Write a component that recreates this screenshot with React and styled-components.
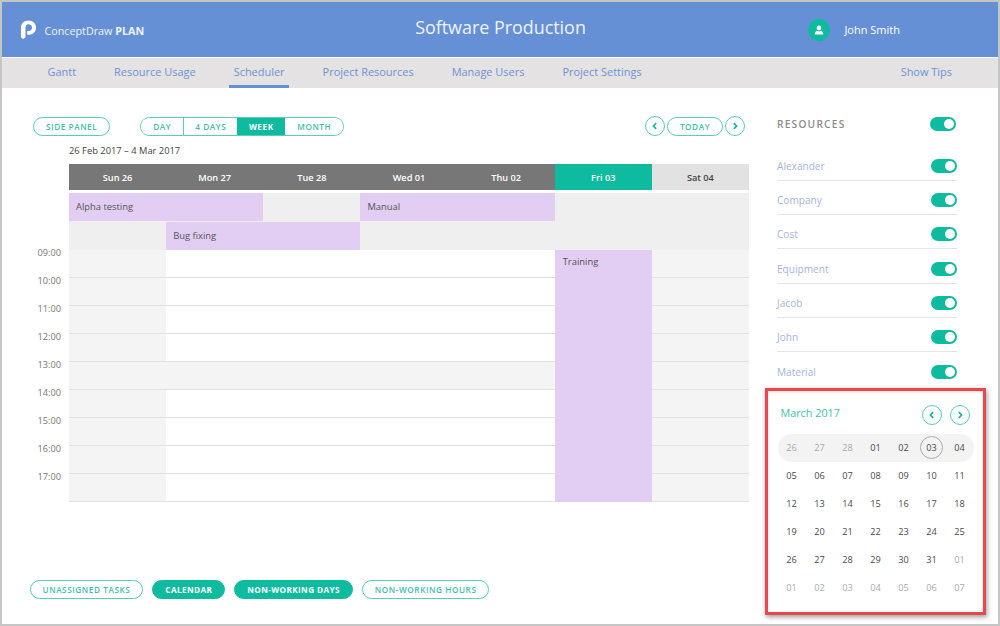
import React from "react";
import styled, { createGlobalStyle } from "styled-components";

const Global = createGlobalStyle`
  html, body { margin: 0; padding: 0; background: #fff; }
  body { font-family: "Open Sans", "Liberation Sans", sans-serif; }
  * { box-sizing: border-box; }
`;

const teal = "#0fbb9f";

const Page = styled.div`
  width: 1000px;
  height: 626px;
  border: 2px solid #c6c6c6;
  display: flex;
  flex-direction: column;
  overflow: hidden;
`;
const Header = styled.header`
  height: 55px;
  background: #6690d6;
  display: grid;
  grid-template-columns: 1fr auto 1fr;
  align-items: center;
  padding: 0 17px 0 18px;
  color: #fff;
`;
const Brand = styled.div`
  display: flex;
  align-items: center;
  gap: 7.5px;
  font-size: 10.75px;
  color: #eef3fb;
  span {
    transform: translateY(1px);
  }
`;
const Title = styled.h1`
  margin: 0;
  font-size: 17.9px;
  font-weight: 400;
  color: #eef3fb;
  transform: translateY(-3.5px);
`;
const User = styled.div`
  justify-self: end;
  margin-right: 81px;
  display: flex;
  align-items: center;
  gap: 14px;
  font-size: 11px;
  font-weight: 500;
`;
const Avatar = styled.span`
  width: 22px;
  height: 22px;
  margin-left: 1px;
  border-radius: 50%;
  background: ${teal};
  display: flex;
  align-items: center;
  justify-content: center;
`;
const Nav = styled.nav`
  height: 30px;
  margin-top: 1px;
  background: #e4e2e2;
  display: flex;
  padding: 0 46px 0 45.5px;
  gap: 38px;
  font-size: 10.96px;
  color: #6f93d4;
`;
const NavItem = styled.a`
  height: 30px;
  display: flex;
  align-items: center;
  padding: 0 4.5px;
  margin: 0 -4.5px;
  border-bottom: 3px solid ${(p) => (p.$active ? "#6690d6" : "transparent")};
  ${(p) => p.$right && "margin-left: auto;"}
`;
const Main = styled.main`
  flex: 1;
  display: flex;
  min-height: 0;
`;
const Left = styled.section`
  width: 775px;
  padding: 28px 0 0 31px;
  display: flex;
  flex-direction: column;
`;
const Toolbar = styled.div`
  display: flex;
  align-items: center;
  height: 20px;
  padding-right: 32px;
`;
const Pill = styled.button`
  height: 19px;
  padding: 0 12px;
  border-radius: 10px;
  border: 1px solid ${(p) => (p.$on ? teal : "#57cdba")};
  background: ${(p) => (p.$on ? teal : "#fff")};
  color: ${(p) => (p.$on ? "#fff" : "#3fbfaa")};
  font: ${(p) => (p.$on ? 700 : 600)} 8.2px "Open Sans", sans-serif;
  letter-spacing: ${(p) => (p.$on ? 0.38 : 0.57)}px;
  white-space: nowrap;
`;
const Segments = styled.div`
  display: flex;
  height: 19px;
  margin-left: 30px;
  border: 1px solid #57cdba;
  border-radius: 10px;
  overflow: hidden;
`;
const Segment = styled.div`
  width: ${(p) => p.$w}px;
  display: flex;
  align-items: center;
  justify-content: center;
  font-size: 8.2px;
  font-weight: ${(p) => (p.$on ? 700 : 600)};
  letter-spacing: 0.55px;
  background: ${(p) => (p.$on ? teal : "#fff")};
  color: ${(p) => (p.$on ? "#fff" : "#3fbfaa")};
  border-left: ${(p) => (p.$sep ? "1px solid #57cdba" : "none")};
`;
const Pager = styled.div`
  margin-left: auto;
  display: flex;
  align-items: center;
  gap: 2px;
`;
const Round = styled.button`
  width: 20px;
  height: 20px;
  padding: 0;
  border-radius: 50%;
  border: 1px solid #57cdba;
  background: #fff;
  display: flex;
  align-items: center;
  justify-content: center;
`;
const TodayPill = styled(Pill)`
  width: 56px;
  padding: 0;
`;
const Range = styled.div`
  margin: 7px 0 0 36px;
  height: 16px;
  font-size: 9.35px;
  line-height: 16px;
  color: #444;
`;
const Board = styled.div`
  margin-top: 5px;
  display: flex;
`;
const Times = styled.div`
  width: 36px;
  padding-top: 86px;
  display: flex;
  flex-direction: column;
  align-items: flex-end;
  padding-right: 8px;
`;
const Time = styled.div`
  height: 28px;
  font-size: 9.2px;
  line-height: 12px;
  color: #777;
  transform: translateY(-3px);
`;
const Calendar = styled.div`
  width: 680px;
  display: flex;
  flex-direction: column;
`;
const Week = styled.div`
  display: grid;
  grid-template-columns: repeat(7, 1fr);
  height: 26px;
`;
const Day = styled.div`
  display: flex;
  align-items: center;
  justify-content: center;
  font-size: 9.2px;
  font-weight: 600;
  background: ${(p) => p.$bg};
  color: ${(p) => p.$fg};
`;
const AllDay = styled.div`
  margin-top: 3px;
  height: 57px;
  background: #efefef;
  display: grid;
  grid-template-columns: repeat(7, 1fr);
  grid-template-rows: 28px 28px;
  row-gap: 1px;
`;
const Event = styled.div`
  grid-column: ${(p) => p.$col} / span ${(p) => p.$span};
  grid-row: ${(p) => p.$row} / span ${(p) => p.$rows || 1};
  background: #e2cdf3;
  color: #555;
  font-size: 9.4px;
  padding: ${(p) => p.$top || 6}px 7px;
  padding-left: ${(p) => p.$left || 7}px;
  line-height: 16px;
  z-index: 1;
`;
const Hours = styled.div`
  display: grid;
  grid-template-columns: repeat(7, 1fr);
  grid-template-rows: repeat(9, 28px);
`;
const Cell = styled.div`
  grid-column: ${(p) => p.$col};
  grid-row: ${(p) => p.$row};
  background: ${(p) => (p.$off ? "#f4f4f4" : "#fff")};
  border-bottom: 1px solid #e2e2e2;
`;
const Toggles = styled.div`
  margin-top: auto;
  margin-bottom: 25px;
  margin-left: -3.5px;
  display: flex;
  gap: 9px;
`;
const Side = styled.aside`
  flex: 1;
  padding: 26px 0 0 0;
  position: relative;
`;
const Resources = styled.div`
  width: 180px;
`;
const ResHead = styled.div`
  height: 20px;
  display: flex;
  align-items: center;
  justify-content: space-between;
  font-size: 10.2px;
  font-weight: 600;
  letter-spacing: 1.2px;
  color: #8e8c8a;
  margin-bottom: 13px;
  padding-right: 1px;
`;
const ResRow = styled.div`
  height: 34.15px;
  padding-top: 5.25px;
  display: flex;
  align-items: center;
  justify-content: space-between;
  font-size: 10.1px;
  color: #a5b5e0;
  border-bottom: ${(p) => (p.$last ? "none" : "1px solid #e4e4e4")};
`;
const Switch = styled.span`
  width: 26px;
  height: 14px;
  background: ${teal};
  border-radius: 7px;
  display: flex;
  align-items: center;
  justify-content: flex-end;
  padding-right: 2px;
  &::after {
    content: "";
    width: 10px;
    height: 10px;
    border-radius: 50%;
    background: #fff;
  }
`;
const DateCard = styled.div`
  position: absolute;
  left: -12px;
  top: 300px;
  width: 220.5px;
  height: 227px;
  border: 3px solid #e9474c;
  box-shadow: 1px 2px 5px rgba(0, 0, 0, 0.4), inset 0 1px 3px rgba(0, 0, 0, 0.15);
  background: #fff;
  padding: 12px 9.5px 0;
`;
const MonthBar = styled.div`
  display: flex;
  align-items: center;
  justify-content: space-between;
  height: 24px;
  padding: 0 3px 0 3px;
  margin-bottom: 6.5px;
`;
const MonthName = styled.div`
  font-size: 10.8px;
  color: #3fbfa8;
  margin-top: -5px;
`;
const MonthNav = styled.div`
  display: flex;
  gap: 8px;
`;
const MonthGrid = styled.div`
  display: grid;
  grid-template-columns: repeat(7, 28px);
  grid-auto-rows: 28px;
`;
const Highlight = styled.div`
  grid-column: 1 / -1;
  display: grid;
  grid-template-columns: repeat(7, 28px);
  background: #f3f3f3;
  border-radius: 14px;
`;
const DateCell = styled.div`
  display: flex;
  align-items: center;
  justify-content: center;
  font-size: 9.2px;
  color: ${(p) => (p.$muted ? "#aaa" : "#4a4a4a")};
  span {
    width: 23px;
    height: 23px;
    display: flex;
    align-items: center;
    justify-content: center;
    border-radius: 50%;
    border: ${(p) => (p.$today ? "1px solid #aaa" : "1px solid transparent")};
  }
`;

const Chevron = ({ dir, size = 8 }) => (
  <svg width={size} height={size} viewBox="0 0 8 8" fill="none" stroke="#14b79c" strokeWidth="1.7">
    <path d={dir === "l" ? "M5.2 1.2 2.400 4l2.800 2.800" : "M2.800 1.200 5.600 4 2.800 6.800"} />
  </svg>
);

const Logo = () => (
  <svg width="17" height="21" viewBox="0 0 18 21">
    <path
      d="M1 18V8.500C1 4 4.500 1 9 1c4.600 0 8 3.300 8 7.600 0 4.300-3.500 7.500-8 7.500H7.600v-4H9c2.200 0 3.800-1.500 3.800-3.500S11.200 5 9 5 5.800 6.500 5.800 8.600V18c0 1.300-1 2.200-2.400 2.200S1 19.300 1 18Z"
      fill="#fff"
    />
  </svg>
);

const UserIcon = () => (
  <svg width="10" height="10" viewBox="0 0 11 11" fill="#fff">
    <circle cx="5.500" cy="3.200" r="2.600" />
    <path d="M.8 10.500c0-2.800 1.700-4 3-4.300l1.700 1 1.700-1c1.300.3 3 1.500 3 4.300Z" />
  </svg>
);

const days = [
  ["Sun 26", "#777", "#fff"],
  ["Mon 27", "#777", "#fff"],
  ["Tue 28", "#777", "#fff"],
  ["Wed 01", "#777", "#fff"],
  ["Thu 02", "#777", "#fff"],
  ["Fri 03", teal, "#fff"],
  ["Sat 04", "#e2e2e2", "#444"],
];
const times = ["09:00", "10:00", "11:00", "12:00", "13:00", "14:00", "15:00", "16:00", "17:00"];
const resources = ["Alexander", "Company", "Cost", "Equipment", "Jacob", "John", "Material"];
const weeks = [
  ["05", "06", "07", "08", "09", "10", "11"],
  ["12", "13", "14", "15", "16", "17", "18"],
  ["19", "20", "21", "22", "23", "24", "25"],
  ["26", "27", "28", "29", "30", "31", "01"],
  ["01", "02", "03", "04", "05", "06", "07"],
];

export default function App() {
  return (
    <Page>
      <Global />
      <Header>
        <Brand>
          <Logo />
          <span>
            ConceptDraw <b>PLAN</b>
          </span>
        </Brand>
        <Title>Software Production</Title>
        <User>
          <Avatar>
            <UserIcon />
          </Avatar>
          John Smith
        </User>
      </Header>
      <Nav>
        <NavItem>Gantt</NavItem>
        <NavItem>Resource Usage</NavItem>
        <NavItem $active>Scheduler</NavItem>
        <NavItem>Project Resources</NavItem>
        <NavItem>Manage Users</NavItem>
        <NavItem>Project Settings</NavItem>
        <NavItem $right>Show Tips</NavItem>
      </Nav>
      <Main>
        <Left>
          <Toolbar>
            <Pill>SIDE PANEL</Pill>
            <Segments>
              <Segment $w={42}>DAY</Segment>
              <Segment $w={54} $sep>4 DAYS</Segment>
              <Segment $w={48} $on>WEEK</Segment>
              <Segment $w={58}>MONTH</Segment>
            </Segments>
            <Pager>
              <Round><Chevron dir="l" /></Round>
              <TodayPill>TODAY</TodayPill>
              <Round><Chevron dir="r" /></Round>
            </Pager>
          </Toolbar>
          <Range>26 Feb 2017 – 4 Mar 2017</Range>
          <Board>
            <Times>
              {times.map((t) => (
                <Time key={t}>{t}</Time>
              ))}
            </Times>
            <Calendar>
              <Week>
                {days.map(([d, bg, fg]) => (
                  <Day key={d} $bg={bg} $fg={fg}>{d}</Day>
                ))}
              </Week>
              <AllDay>
                <Event $col={1} $span={2} $row={1}>Alpha testing</Event>
                <Event $col={4} $span={2} $row={1}>Manual</Event>
                <Event $col={2} $span={2} $row={2}>Bug fixing</Event>
              </AllDay>
              <Hours>
                {times.flatMap((t, r) =>
                  days.map((d, c) => (
                    <Cell key={t + c} $row={r + 1} $col={c + 1} $off={c === 0 || c === 6 || r === 4} />
                  ))
                )}
                <Event $col={6} $span={1} $row={1} $rows={9} $top={4} $left={8}>Training</Event>
              </Hours>
            </Calendar>
          </Board>
          <Toggles>
            <Pill>UNASSIGNED TASKS</Pill>
            <Pill $on>CALENDAR</Pill>
            <Pill $on>NON-WORKING DAYS</Pill>
            <Pill>NON-WORKING HOURS</Pill>
          </Toggles>
        </Left>
        <Side>
          <Resources>
            <ResHead>
              RESOURCES
              <Switch />
            </ResHead>
            {resources.map((r, i) => (
              <ResRow key={r} $last={i === resources.length - 1}>
                {r}
                <Switch />
              </ResRow>
            ))}
          </Resources>
          <DateCard>
            <MonthBar>
              <MonthName>March 2017</MonthName>
              <MonthNav>
                <Round><Chevron dir="l" /></Round>
                <Round><Chevron dir="r" /></Round>
              </MonthNav>
            </MonthBar>
            <MonthGrid>
              <Highlight>
                {["26", "27", "28"].map((d) => (
                  <DateCell key={d} $muted><span>{d}</span></DateCell>
                ))}
                <DateCell><span>01</span></DateCell>
                <DateCell><span>02</span></DateCell>
                <DateCell $today><span>03</span></DateCell>
                <DateCell><span>04</span></DateCell>
              </Highlight>
              {weeks.flatMap((w, i) =>
                w.map((d, j) => (
                  <DateCell key={i + "-" + j} $muted={i === 4 || (i === 3 && j === 6)}>
                    <span>{d}</span>
                  </DateCell>
                ))
              )}
            </MonthGrid>
          </DateCard>
        </Side>
      </Main>
    </Page>
  );
}
